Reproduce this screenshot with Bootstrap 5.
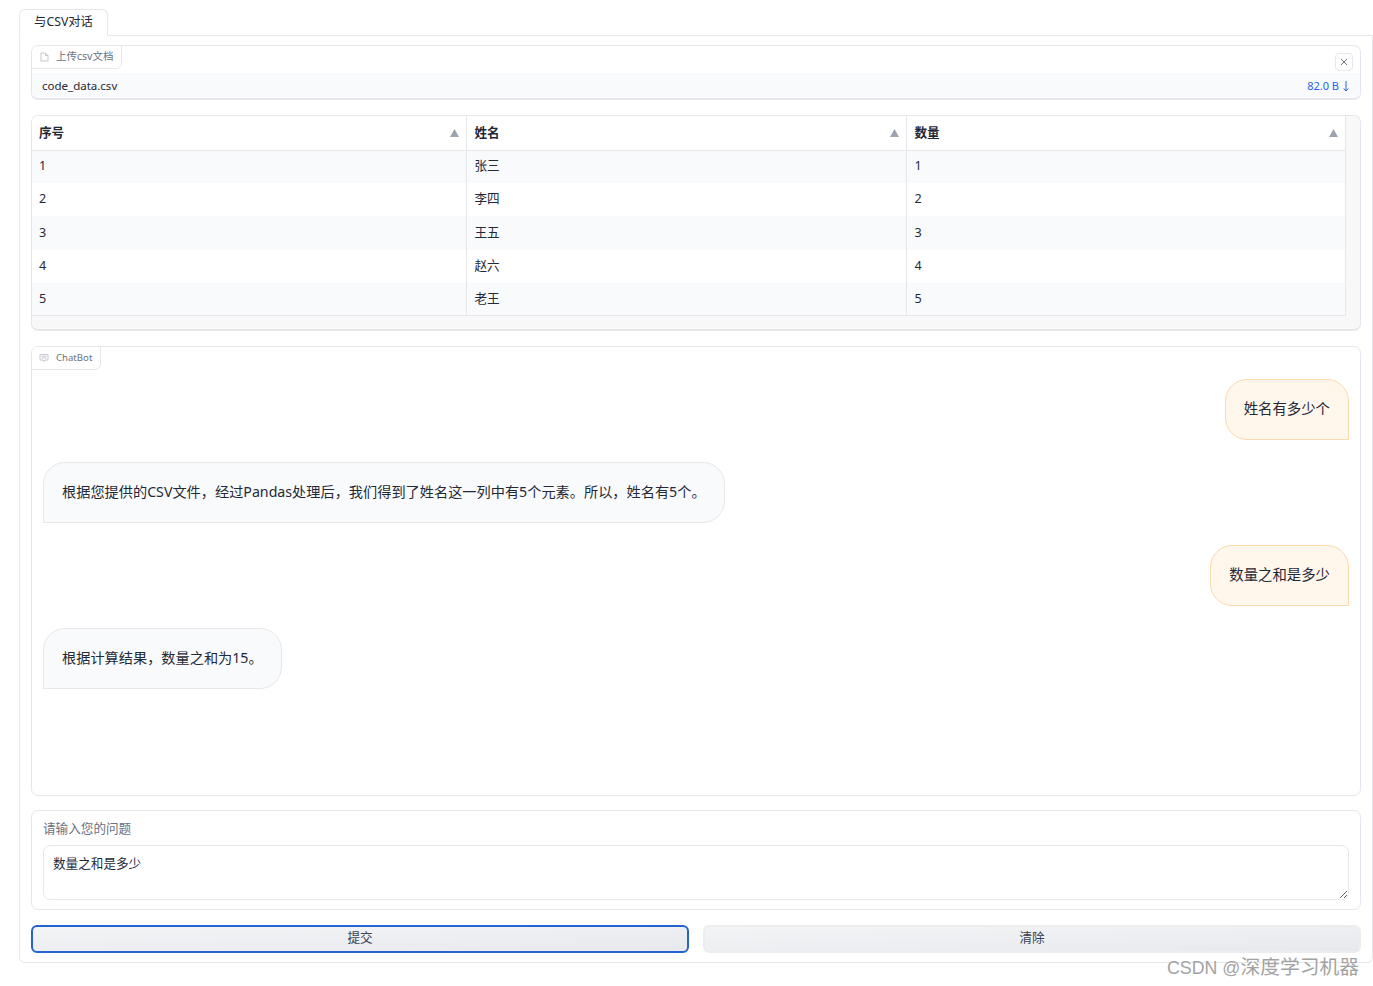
<!DOCTYPE html>
<html lang="zh-CN">
<head>
  <meta charset="UTF-8" />
  <meta name="viewport" content="width=device-width, initial-scale=1.0"/>
  <title>与CSV对话</title>
  <link rel="stylesheet" href="https://cdn.jsdelivr.net/npm/bootstrap@5.3.0/dist/css/bootstrap.min.css">
  <style>
    body {
      background-color: #fff;
      color: #1f2937;
      font-family: "Noto Sans", "Noto Sans CJK SC", sans-serif;
      font-size: 12.6px;
      height: 986px;
      overflow: hidden;
      position: relative;
    }
    .page-wrap { padding: 9px 0 0 19px; }
    .tab-btn {
      width: 89px;
      height: 27px;
      margin-bottom: -1px;
      position: relative;
      z-index: 1;
      background: #fff;
      border: 1px solid #e5e7eb;
      border-bottom-color: #fff;
      border-radius: 6px 6px 0 0;
      font-size: 12.3px;
      line-height: 24px;
      text-align: center;
    }
    .tab-panel {
      height: 928px;
      padding: 9px 11px 9px 11px;
      border: 1px solid #e5e7eb;
      border-radius: 0 0 6px 6px;
    }
    .block {
      position: relative;
      border: 1px solid #e5e7eb;
      border-radius: 7px;
      background: #fff;
      overflow: hidden;
    }
    .block-label {
      position: absolute;
      top: -1px;
      left: -1px;
      height: 24px;
      display: flex;
      align-items: center;
      gap: 7px;
      padding: 0 8px;
      background: #fff;
      border: 1px solid #e5e7eb;
      border-radius: 0 0 6px 0;
      color: #6b7280;
      font-size: 10.5px;
      line-height: 20px;
      z-index: 2;
    }
    .block-label span { position: relative; top: -1px; }
    .chat-label { font-size: 9.6px; padding-left: 7px; }
    .chat-label span { top: 0; }
    .file-block { height: 55px; border-bottom-width: 2px; }
    .close-btn {
      position: absolute;
      top: 7px;
      right: 7px;
      width: 18px;
      height: 18px;
      display: flex;
      align-items: center;
      justify-content: center;
      border: 1px solid #e5e7eb;
      border-radius: 4px;
      background: #fff;
    }
    .file-row {
      margin-top: 27px;
      height: 26px;
      padding: 0 11px 0 10px;
      background: #f9fafb;
      font-size: 11.5px;
    }
    .file-size { color: #2563eb; font-size: 11px; }
    .data-block {
      height: 216px;
      margin-top: 15px;
      background: #f8f8f8;
      border-bottom-width: 2px;
    }
    .data-table {
      width: 1313px;
      height: 200px;
      margin: 0;
      table-layout: fixed;
      background: #fff;
      border-right: 1px solid #e5e7eb;
      border-bottom: 1px solid #e5e7eb;
      font-size: 12.6px;
    }
    .data-table th, .data-table td {
      padding: 0 7px;
      vertical-align: middle;
      border: 0;
      border-right: 1px solid #e5e7eb;
      color: #1f2937;
      box-shadow: none;
      background: #fff;
    }
    .data-table th + th, .data-table td + td { padding-left: 8px; }
    .data-table th {
      height: 34px;
      padding-top: 2px;
      font-weight: 700;
      border-bottom: 1px solid #e5e7eb;
    }
    .data-table tbody tr { height: 33.2px; }
    .data-table tbody tr:nth-child(odd) td { background: #f9fafb; }
    .sort-tri { float: right; margin: 5px 0 0 0; }
    .chat-block {
      height: 450px;
      margin-top: 15px;
      padding: 32px 11px 0 11px;
      display: flex;
      flex-direction: column;
      gap: 22px;
    }
    .bubble {
      height: 61px;
      padding: 0 18px 2px;
      display: flex;
      align-items: center;
      font-size: 14.2px;
      border: 1px solid;
      border-radius: 22px;
    }
    .bubble-user {
      align-self: flex-end;
      background: #fff6ec;
      border-color: #fcd9ac;
      border-bottom-right-radius: 0;
      font-size: 14.4px;
    }
    .bubble-bot {
      align-self: flex-start;
      background: #f9fafb;
      border-color: #e5e7eb;
      border-bottom-left-radius: 0;
    }
    .input-block {
      height: 100px;
      margin-top: 14px;
      padding: 8px 11px 0 11px;
    }
    .input-label { color: #6b7280; font-size: 12.6px; line-height: 20px; margin-bottom: 6px; }
    .input-area {
      height: 55px;
      padding: 9px 9px 7px;
      border-color: #e5e7eb;
      border-radius: 7px;
      color: #1f2937;
      font-size: 12.6px;
      line-height: 18px;
    }
    .btn-row { margin-top: 15px; gap: 14px; }
    .gray-btn {
      flex: 1 1 0;
      height: 28px;
      padding: 0 0 2px;
      font-size: 12.6px;
      color: #374151;
      border: 2px solid #eceded;
      border-radius: 6px;
      background: linear-gradient(to bottom right, #f3f4f6, #e8e9ed);
    }
    .gray-btn.is-focus { border-color: #2563d4; }
    .watermark {
      position: absolute;
      left: 1167px;
      top: 952px;
      color: #a3a3a3;
      font-family: "Noto Sans CJK SC", sans-serif;
      font-size: 19.8px;
      line-height: 28px;
      white-space: nowrap;
    }
    .watermark-latin { font-family: "Liberation Sans", sans-serif; font-size: 17.8px; }
  </style>
</head>
<body>
  <div class="page-wrap">
    <div class="tab-btn">与CSV对话</div>
    <div class="tab-panel">

      <!-- 上传文件 -->
      <div class="block file-block">
        <div class="block-label">
          <svg width="9" height="10" viewBox="0 0 9 10" fill="none" stroke="#c4c8cf" stroke-width="1"><path d="M1 1h4.5L8 3.5V9H1zM5.5 1v2.5H8"/></svg>
          <span>上传csv文档</span>
        </div>
        <div class="close-btn">
          <svg width="8" height="8" viewBox="0 0 8 8" stroke="#6b7280" stroke-width="1"><path d="M1 1l6 6M7 1L1 7"/></svg>
        </div>
        <div class="file-row d-flex justify-content-between align-items-center">
          <span>code_data.csv</span>
          <span class="file-size d-flex align-items-center gap-1">82.0 B
            <svg width="6" height="11" viewBox="0 0 6 11" fill="none" stroke="#2563eb" stroke-width="1"><path d="M3 0v9.5M.7 7.5L3 10l2.3-2.5"/></svg>
          </span>
        </div>
      </div>

      <!-- 表格 -->
      <div class="block data-block">
        <table class="table data-table">
          <colgroup>
            <col style="width: 434px">
            <col style="width: 440px">
            <col style="width: 439px">
          </colgroup>
          <thead>
            <tr>
              <th>序号<svg class="sort-tri" width="9" height="8" viewBox="0 0 9 8"><path d="M4.5 0L9 8H0z" fill="#9ca3af"/></svg></th>
              <th>姓名<svg class="sort-tri" width="9" height="8" viewBox="0 0 9 8"><path d="M4.5 0L9 8H0z" fill="#9ca3af"/></svg></th>
              <th>数量<svg class="sort-tri" width="9" height="8" viewBox="0 0 9 8"><path d="M4.5 0L9 8H0z" fill="#9ca3af"/></svg></th>
            </tr>
          </thead>
          <tbody>
            <tr><td>1</td><td>张三</td><td>1</td></tr>
            <tr><td>2</td><td>李四</td><td>2</td></tr>
            <tr><td>3</td><td>王五</td><td>3</td></tr>
            <tr><td>4</td><td>赵六</td><td>4</td></tr>
            <tr><td>5</td><td>老王</td><td>5</td></tr>
          </tbody>
        </table>
      </div>

      <!-- 对话 -->
      <div class="block chat-block">
        <div class="block-label chat-label">
          <svg width="10" height="10" viewBox="0 0 10 10" fill="none" stroke="#c4c8cf" stroke-width="1"><path d="M1 1.5h8v5.5H6L5 8.5 4 7H1zM2.5 3.3h5M2.5 5h5"/></svg>
          <span>ChatBot</span>
        </div>
        <div class="bubble bubble-user">姓名有多少个</div>
        <div class="bubble bubble-bot">根据您提供的CSV文件，经过Pandas处理后，我们得到了姓名这一列中有5个元素。所以，姓名有5个。</div>
        <div class="bubble bubble-user">数量之和是多少</div>
        <div class="bubble bubble-bot">根据计算结果，数量之和为15。</div>
      </div>

      <!-- 输入 -->
      <div class="block input-block">
        <div class="input-label">请输入您的问题</div>
        <textarea class="form-control input-area">数量之和是多少</textarea>
      </div>

      <div class="d-flex btn-row">
        <button class="btn gray-btn is-focus">提交</button>
        <button class="btn gray-btn">清除</button>
      </div>
    </div>
  </div>
  <div class="watermark"><span class="watermark-latin">CSDN @</span>深度学习机器</div>
  <script src="https://cdn.jsdelivr.net/npm/bootstrap@5.3.0/dist/js/bootstrap.bundle.min.js"></script>
</body>
</html>
